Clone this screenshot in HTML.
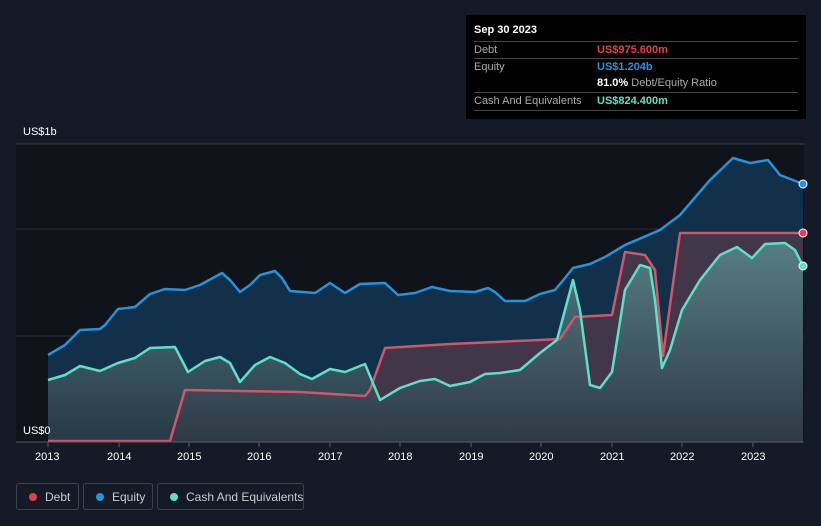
<!DOCTYPE html>
<html><head><style>
body{margin:0;width:821px;height:526px;background:#151b26;font-family:"Liberation Sans",sans-serif;overflow:hidden;position:relative}
.tt{position:absolute;left:466px;top:15px;width:340px;height:104px;background:#000;color:#fff;font-size:11px}
.row{position:absolute;left:8px;width:324px;border-top:1px solid #444;height:17px}
.row span{position:absolute;top:2px;white-space:nowrap}
.lg{position:absolute;top:483px;height:27px;border:1px solid #3c4250;border-radius:3px;color:#c8ccd2;font-size:12px;box-sizing:border-box;white-space:nowrap}
.lg i{position:absolute;left:12px;top:9px;width:8px;height:8px;border-radius:50%}
.lg span{position:absolute;left:28px;top:6px}
.ax{position:absolute;top:451px;color:#fff;font-size:11px}
</style></head><body>
<svg width="821" height="526" style="position:absolute;left:0;top:0">
<defs><linearGradient id="cg" x1="0" y1="0" x2="0" y2="1"><stop offset="0" stop-color="#5a8a8e"/><stop offset="1" stop-color="#2c3a46"/></linearGradient></defs>
<rect x="16" y="144" width="788" height="298" fill="#0f131a"/>
<line x1="16" y1="144" x2="804" y2="144" stroke="#3a3f48"/>
<line x1="16" y1="229" x2="804" y2="229" stroke="#2a2f38"/>
<line x1="16" y1="336" x2="804" y2="336" stroke="#2a2f38"/>
<path d="M48,355 L65,345 80,330 100,329 105,325 118,309 135,307 150,294 165,289 185,290 200,285 222,273 230,280 240,292 250,285 260,275 275,271 282,278 290,291 315,293 330,283 345,293 360,284 385,283 398,295 415,293 432,287 450,291 475,292 488,288 495,292 505,301 525,301 540,294 555,290 565,278 573,268 590,264 605,257 625,245 660,230 680,215 710,180 733,158 750,163 768,160 780,175 803,184 L803,442 48,442Z" fill="#12304a"/>
<path d="M48,441 L170,441 185,390 240,391 300,392 365,396 370,390 385,348 450,344 540,340 560,339 575,317 612,315 625,252 645,255 655,270 663,356 680,233 803,233 L803,442 48,442Z" fill="#4a3848" opacity="0.85"/>
<path d="M48,380 L65,375 80,366 100,371 118,363 135,358 150,348 175,347 188,372 205,361 220,357 230,363 240,382 255,365 270,357 285,363 300,374 312,379 330,369 345,372 365,364 380,400 400,388 420,381 435,379 450,386 470,382 485,374 500,373 520,370 540,353 557,340 565,310 573,280 580,310 590,385 600,388 612,372 625,290 640,265 650,268 655,300 662,368 670,350 682,310 700,280 720,255 737,247 752,258 765,244 785,243 795,250 803,266 L803,442 48,442Z" fill="url(#cg)" opacity="0.85"/>
<g fill="none" stroke-width="2.5" stroke-linejoin="round">
<path d="M48,355 L65,345 80,330 100,329 105,325 118,309 135,307 150,294 165,289 185,290 200,285 222,273 230,280 240,292 250,285 260,275 275,271 282,278 290,291 315,293 330,283 345,293 360,284 385,283 398,295 415,293 432,287 450,291 475,292 488,288 495,292 505,301 525,301 540,294 555,290 565,278 573,268 590,264 605,257 625,245 660,230 680,215 710,180 733,158 750,163 768,160 780,175 803,184" stroke="#2394e0"/>
<path d="M48,441 L170,441 185,390 240,391 300,392 365,396 370,390 385,348 450,344 540,340 560,339 575,317 612,315 625,252 645,255 655,270 663,356 680,233 803,233" stroke="#d0566a"/>
<path d="M48,380 L65,375 80,366 100,371 118,363 135,358 150,348 175,347 188,372 205,361 220,357 230,363 240,382 255,365 270,357 285,363 300,374 312,379 330,369 345,372 365,364 380,400 400,388 420,381 435,379 450,386 470,382 485,374 500,373 520,370 540,353 557,340 565,310 573,280 580,310 590,385 600,388 612,372 625,290 640,265 650,268 655,300 662,368 670,350 682,310 700,280 720,255 737,247 752,258 765,244 785,243 795,250 803,266" stroke="#5ee0c8"/>
</g>
<line x1="16" y1="442" x2="804" y2="442" stroke="#555c66"/>
<g stroke="#555c66"><line x1="48" y1="442" x2="48" y2="447"/><line x1="119" y1="442" x2="119" y2="447"/><line x1="189" y1="442" x2="189" y2="447"/><line x1="259" y1="442" x2="259" y2="447"/><line x1="330" y1="442" x2="330" y2="447"/><line x1="400" y1="442" x2="400" y2="447"/><line x1="471" y1="442" x2="471" y2="447"/><line x1="541" y1="442" x2="541" y2="447"/><line x1="612" y1="442" x2="612" y2="447"/><line x1="682" y1="442" x2="682" y2="447"/><line x1="753" y1="442" x2="753" y2="447"/></g>
<circle cx="803" cy="184" r="4" fill="#2394e0" stroke="#fff"/>
<circle cx="803" cy="233" r="4" fill="#e04050" stroke="#fff"/>
<circle cx="803" cy="266" r="4" fill="#5ee0c8" stroke="#fff"/>
</svg>
<div style="position:absolute;left:23px;top:126px;color:#fff;font-size:11px">US$1b</div>
<div style="position:absolute;left:23px;top:425px;color:#fff;font-size:11px">US$0</div>
<div class="ax" style="left:35px">2013</div><div class="ax" style="left:107px">2014</div><div class="ax" style="left:177px">2015</div><div class="ax" style="left:247px">2016</div><div class="ax" style="left:318px">2017</div><div class="ax" style="left:388px">2018</div><div class="ax" style="left:459px">2019</div><div class="ax" style="left:529px">2020</div><div class="ax" style="left:600px">2021</div><div class="ax" style="left:670px">2022</div><div class="ax" style="left:741px">2023</div>
<div class="tt">
<div style="position:absolute;left:8px;top:9px;font-weight:bold;font-size:11px">Sep 30 2023</div>
<div class="row" style="top:26px"><span style="left:0;color:#aaa">Debt</span><span style="left:123px;color:#e5404a;font-weight:bold">US$975.600m</span></div>
<div class="row" style="top:43px"><span style="left:0;color:#aaa">Equity</span><span style="left:123px;color:#2394e0;font-weight:bold">US$1.204b</span></div>
<div class="row" style="top:60px;border:none"><span style="left:123px"><b>81.0%</b> <span style="position:static;color:#aaa">Debt/Equity Ratio</span></span></div>
<div class="row" style="top:77px"><span style="left:0;color:#aaa">Cash And Equivalents</span><span style="left:123px;color:#5ee0c8;font-weight:bold">US$824.400m</span></div>
<div class="row" style="top:95px;height:0"></div>
</div>
<div class="lg" style="left:16px;width:63px"><i style="background:#e5404a"></i><span>Debt</span></div>
<div class="lg" style="left:83px;width:70px"><i style="background:#2394e0"></i><span>Equity</span></div>
<div class="lg" style="left:157px;width:147px"><i style="background:#5ee0c8"></i><span>Cash And Equivalents</span></div>
</body></html>
